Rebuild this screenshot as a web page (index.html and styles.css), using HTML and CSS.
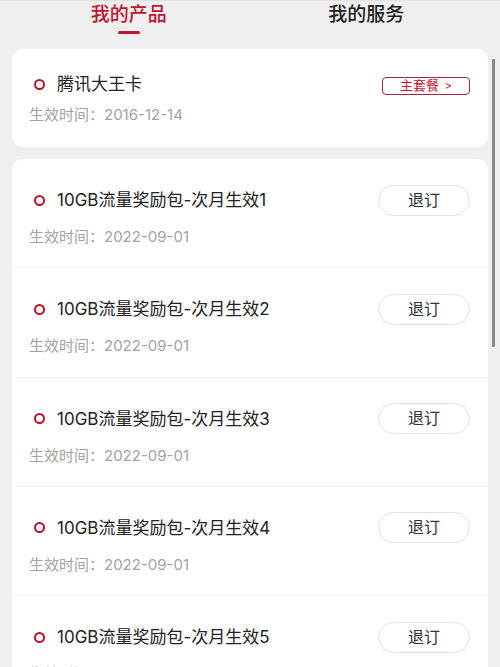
FILE: index.html
```html
<!DOCTYPE html>
<html lang="zh">
<head>
<meta charset="utf-8">
<link rel="stylesheet" href="styles.css">
</head>
<body>
<div class="page">
  <div class="tabs">
    <div class="tab active">我的产品<span class="bar"></span></div>
    <div class="tab">我的服务</div>
  </div>
  <div class="card main">
    <div class="row first">
      <div class="title"><span class="dot"></span>腾讯大王卡</div>
      <div class="badge">主套餐 <span class="chev">&gt;</span></div>
    </div>
    <div class="sub">生效时间：2016-12-14</div>
  </div>
  <div class="card list">
    <div class="item">
      <div class="row"><div class="title"><span class="dot"></span>10GB流量奖励包-次月生效1</div><div class="btn">退订</div></div>
      <div class="sub">生效时间：2022-09-01</div>
    </div>
    <div class="item">
      <div class="row"><div class="title"><span class="dot"></span>10GB流量奖励包-次月生效2</div><div class="btn">退订</div></div>
      <div class="sub">生效时间：2022-09-01</div>
    </div>
    <div class="item">
      <div class="row"><div class="title"><span class="dot"></span>10GB流量奖励包-次月生效3</div><div class="btn">退订</div></div>
      <div class="sub">生效时间：2022-09-01</div>
    </div>
    <div class="item">
      <div class="row"><div class="title"><span class="dot"></span>10GB流量奖励包-次月生效4</div><div class="btn">退订</div></div>
      <div class="sub">生效时间：2022-09-01</div>
    </div>
    <div class="item">
      <div class="row"><div class="title"><span class="dot"></span>10GB流量奖励包-次月生效5</div><div class="btn">退订</div></div>
      <div class="sub">生效时间：2022-09-01</div>
    </div>
  </div>
  <div class="scrollbar"></div>
</div>
</body>
</html>
```
FILE: styles.css
```css
html, body {
  margin: 0;
  padding: 0;
  background: #efefef;
  font-family: "Inter", "Noto Sans CJK SC", sans-serif;
  overflow: hidden;
}
.page {
  position: relative;
  height: 667px;
  border-top: 1px solid #e2e2e2;
  box-sizing: border-box;
}
.tabs {
  display: flex;
  height: 48px;
}
.tab {
  position: relative;
  flex: 1;
  text-align: center;
  font-size: 19px;
  line-height: 26px;
  padding-top: 1px;
  font-weight: 500;
  color: #1e1e1e;
}
.tab:first-child { padding-left: 10px; }
.tab:last-child { padding-right: 15px; }
.tab.active { color: #c0142c; }
.tab .bar {
  position: absolute;
  left: 50%;
  margin-left: -6px;
  top: 30px;
  width: 22px;
  height: 3px;
  border-radius: 2px;
  background: #c0142c;
}
.card {
  background: #fff;
  margin: 0 12px;
  border-radius: 11px;
}
.card.main {
  height: 98px;
  box-sizing: border-box;
  padding: 23px 18px 0 17px;
}
.card.list {
  margin-top: 12px;
}
.item {
  height: 109.3px;
  box-sizing: border-box;
  padding: 25px 18px 0 17px;
  border-bottom: 1px solid #f2f2f2;
}
.row {
  display: flex;
  align-items: center;
  justify-content: space-between;
  height: 32px;
}
.row.first { height: 24px; }
.title {
  display: flex;
  align-items: center;
  font-size: 17px;
  line-height: 24px;
  color: #222;
}
.dot {
  width: 7px;
  height: 7px;
  border: 2.5px solid #b3122c;
  border-radius: 50%;
  margin-left: 5px;
  margin-right: 12px;
}
.sub {
  font-size: 15px;
  line-height: 20px;
  color: #a3a3a3;
  margin-top: 9px;
}
.item .sub { margin-top: 11px; }
.badge {
  width: 88px;
  height: 18px;
  box-sizing: border-box;
  border: 1.5px solid #9c2a3c;
  border-radius: 4px;
  color: #c0142c;
  font-size: 13px;
  line-height: 15px;
  text-align: center;
  margin-top: 4px;
}
.badge .chev { font-size: 11px; margin-left: 2px; }
.btn {
  width: 92px;
  height: 31px;
  box-sizing: border-box;
  border: 1px solid #e2e2e2;
  border-radius: 16px;
  font-size: 16px;
  line-height: 29px;
  text-align: center;
  color: #333;
}
.scrollbar {
  position: absolute;
  left: 492px;
  top: 58px;
  width: 3px;
  height: 288px;
  background: #8a8a8a;
  border-radius: 1px;
}
```
